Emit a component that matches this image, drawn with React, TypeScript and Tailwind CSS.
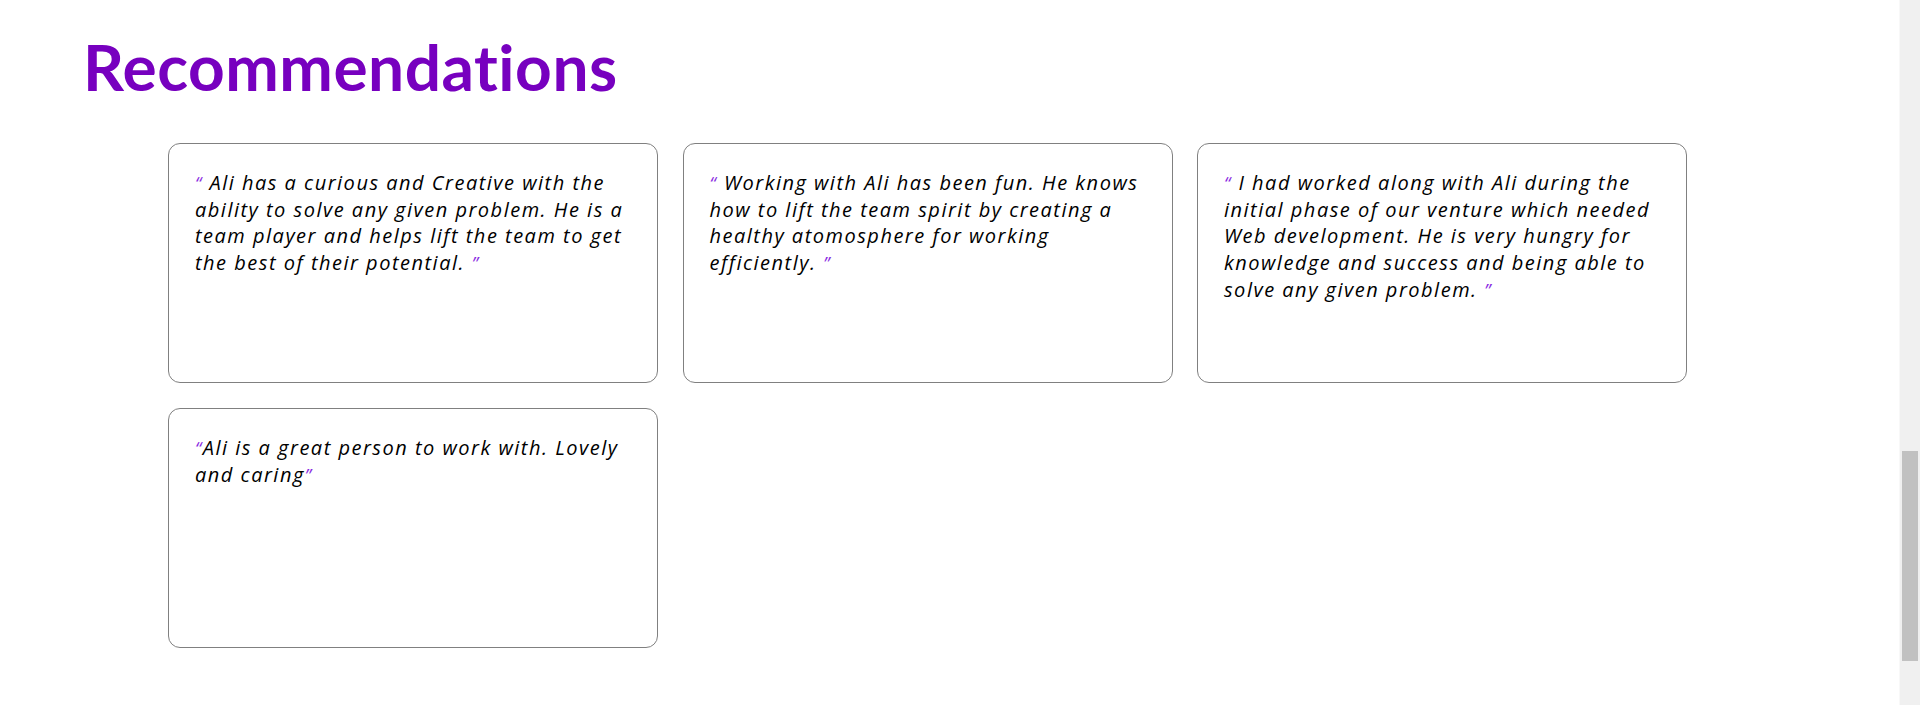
import React from "react";

const Q = ({ children }: { children: React.ReactNode }) => (
  <span className="text-[18px] text-[#8a2be2]">{children}</span>
);

const cards: { body: React.ReactNode }[] = [
  {
    body: (
      <>
        <Q>“</Q> Ali has a curious and Creative with the ability to solve any given problem. He is a team player and helps lift the team to get the best of their potential. <Q>”</Q>
      </>
    ),
  },
  {
    body: (
      <>
        <Q>“</Q> Working with Ali has been fun. He knows how to lift the team spirit by creating a healthy atomosphere for working efficiently. <Q>”</Q>
      </>
    ),
  },
  {
    body: (
      <>
        <Q>“</Q> I had worked along with Ali during the initial phase of our venture which needed Web development. He is very hungry for knowledge and success and being able to solve any given problem. <Q>”</Q>
      </>
    ),
  },
  {
    body: (
      <>
        <Q>“</Q>Ali is a great person to work with. Lovely and caring<Q>”</Q>
      </>
    ),
  },
];

export default function App() {
  return (
    <div className="flex h-[705px] w-[1920px] overflow-hidden bg-white">
      <main className="flex-1 pl-[83px] pt-[35px]">
        <h1 className="font-['Lato',sans-serif] text-[64px] font-bold leading-none tracking-[0.5px] text-[#7700bf] [font-variant-ligatures:none]">
          Recommendations
        </h1>
        <div className="mt-[44px] ml-[85px] grid grid-cols-[repeat(3,490px)] gap-x-[24.5px] gap-y-[25px]">
          {cards.map((c, i) => (
            <div
              key={i}
              className="h-[240px] rounded-[12px] border border-[#808080] px-[26px] pt-[26px]"
            >
              <p className="font-['Open_Sans',sans-serif] text-[20px] italic leading-[26.67px] tracking-[1.5px] text-black">
                {c.body}
              </p>
            </div>
          ))}
        </div>
      </main>
      <div className="flex w-[21px] flex-col border-l border-[#f8f8f8] bg-[#f0f0f0] px-[2px] pt-[451px]">
        <div className="h-[210px] w-[16px] bg-[#c1c1c1]" />
      </div>
    </div>
  );
}
